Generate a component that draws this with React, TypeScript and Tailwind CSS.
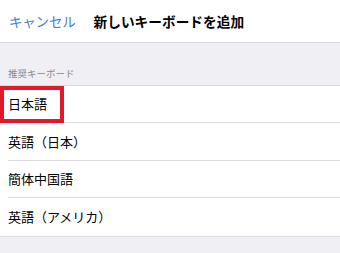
export default function App() {
  const rows = ["日本語", "英語（日本）", "簡体中国語", "英語（アメリカ）"];
  const heights = ["h-[37px]", "h-[38px]", "h-[37px]", "h-[38px]"];

  return (
    <div
      className="w-[340px] h-[253px] bg-[#efeff4] overflow-hidden"
      style={{ fontFamily: '"Noto Sans CJK JP", "Liberation Sans", sans-serif' }}
    >
      {/* header */}
      <div className="h-[43px] bg-white border-b border-[#d9d9dd] flex items-center">
        <span className="pl-[9px] text-[13.5px] text-[#4b7fc0] tracking-[-0.2px]">キャンセル</span>
        <span className="ml-[18px] text-[13.7px] font-bold text-black">新しいキーボードを追加</span>
      </div>

      {/* section label */}
      <div className="h-[42px] flex items-end pb-[5px] pl-[8px]">
        <span className="text-[9.5px] text-[#8a8a8f]">推奨キーボード</span>
      </div>

      {/* list */}
      <div className="bg-white border-t border-b border-[#d9d9dd]">
        {rows.map((label, i) => (
          <div key={label} className={`relative ${heights[i]} pl-[8px]`}>
            <div
              className={`h-full flex items-center ${
                i < rows.length - 1 ? "border-b border-[#dcdce0]" : ""
              }`}
            >
              <span className="text-[13px] text-black">{label}</span>
            </div>
            {i === 0 && (
              <div className="absolute left-0 top-0 w-[64px] h-[37px] border-[4px] border-[#e3182b]" />
            )}
          </div>
        ))}
      </div>
    </div>
  );
}
